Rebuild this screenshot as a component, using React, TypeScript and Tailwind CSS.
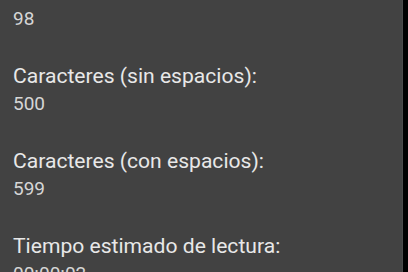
import React from "react";

const groups = [
  { label: "Caracteres (sin espacios):", value: "500" },
  { label: "Caracteres (con espacios):", value: "599" },
  { label: "Tiempo estimado de lectura:", value: "00:00:02" },
];

export default function App() {
  return (
    <div className="flex h-[272px] w-[408px] overflow-hidden bg-black" style={{ fontFamily: "Roboto, 'Noto Sans', sans-serif" }}>
      <div className="flex h-full w-[403px] flex-col bg-[#424242] pl-[13px] pt-[5px] border-r border-[#4a4a4a]">
        <div className="text-[19px] leading-[28px] text-[#d6d6d6]">98</div>
        {groups.map((g) => (
          <div key={g.label} className="mt-[29px] flex flex-col">
            <div className="text-[21.1px] leading-[28px] text-[#e8e8e8]">{g.label}</div>
            <div className="text-[19px] leading-[28px] text-[#d6d6d6]">{g.value}</div>
          </div>
        ))}
      </div>
    </div>
  );
}
